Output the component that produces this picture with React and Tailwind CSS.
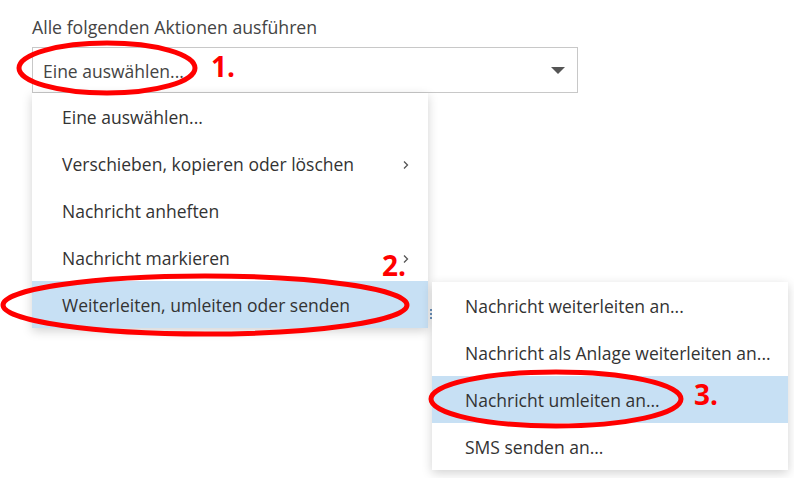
import React from "react";

function Chevron() {
  return (
    <svg width="8" height="10" viewBox="0 0 8 10" className="text-[#555]">
      <path d="M2 1.5 L5.5 5 L2 8.5" fill="none" stroke="currentColor" strokeWidth="1.3" />
    </svg>
  );
}

function MenuItem({ label, active, chevron, pl = "pl-[30px]" }) {
  return (
    <div
      className={
        "h-[47px] flex items-center justify-between pr-[18px] pt-[2px] text-[17.5px] text-[#333] whitespace-nowrap " +
        pl +
        (active ? " bg-[#c7e0f4]" : "")
      }
    >
      <span>{label}</span>
      {chevron && <Chevron />}
    </div>
  );
}

export default function App() {
  const font = { fontFamily: '"Open Sans", "Noto Sans", sans-serif' };

  return (
    <div className="relative w-[794px] h-[478px] bg-white overflow-hidden" style={font}>
      <div className="pl-[32px] pt-[14px]">
        <p className="text-[17.7px] leading-[26px] text-[#444]">Alle folgenden Aktionen ausführen</p>
        <div className="mt-[7px] w-[546px] h-[46px] border border-[#c8c8c8] flex items-center justify-between pl-[10px] pr-[12px] pt-[2px]">
          <span className="text-[17.5px] text-[#444]">Eine auswählen...</span>
          <svg width="14" height="8" viewBox="0 0 14 8">
            <path d="M0 0 H14 L7 7 Z" fill="#555" />
          </svg>
        </div>
      </div>

      {/* Dropdown */}
      <div className="absolute left-[32px] top-[93px] w-[396px] bg-white shadow-[0_3px_10px_rgba(0,0,0,0.18)]">
        <MenuItem label="Eine auswählen..." />
        <MenuItem label="Verschieben, kopieren oder löschen" chevron />
        <MenuItem label="Nachricht anheften" />
        <MenuItem label="Nachricht markieren" chevron />
        <MenuItem label="Weiterleiten, umleiten oder senden" active />
      </div>

      <div className="absolute left-[430px] top-[309px] flex flex-col gap-[2px]">
        <span className="w-[2px] h-[2px] bg-[#6a8fb8]" />
        <span className="w-[2px] h-[2px] bg-[#6a8fb8]" />
        <span className="w-[2px] h-[2px] bg-[#6a8fb8]" />
      </div>

      {/* Submenu */}
      <div className="absolute left-[432px] top-[282px] w-[356px] bg-white shadow-[0_3px_10px_rgba(0,0,0,0.18)]">
        <MenuItem label="Nachricht weiterleiten an..." pl="pl-[33px]" />
        <MenuItem label="Nachricht als Anlage weiterleiten an..." pl="pl-[33px]" />
        <MenuItem label="Nachricht umleiten an..." pl="pl-[33px]" active />
        <MenuItem label="SMS senden an..." pl="pl-[33px]" />
      </div>

      {/* annotations */}
      <svg className="absolute inset-0 pointer-events-none" width="794" height="478">
        <ellipse cx="107" cy="68" rx="88" ry="25" fill="none" stroke="#f00" strokeWidth="5" />
        <ellipse cx="205" cy="305" rx="202" ry="29" fill="none" stroke="#f00" strokeWidth="5" />
        <ellipse cx="556" cy="399" rx="125" ry="27" fill="none" stroke="#f00" strokeWidth="5" />
      </svg>
      <span className="absolute left-[211px] top-[49px] text-[28px] leading-[34px] font-bold text-[#f00]">1.</span>
      <span className="absolute left-[382px] top-[248px] text-[28px] leading-[34px] font-bold text-[#f00]">2.</span>
      <span className="absolute left-[694px] top-[377px] text-[28px] leading-[34px] font-bold text-[#f00]">3.</span>
    </div>
  );
}
